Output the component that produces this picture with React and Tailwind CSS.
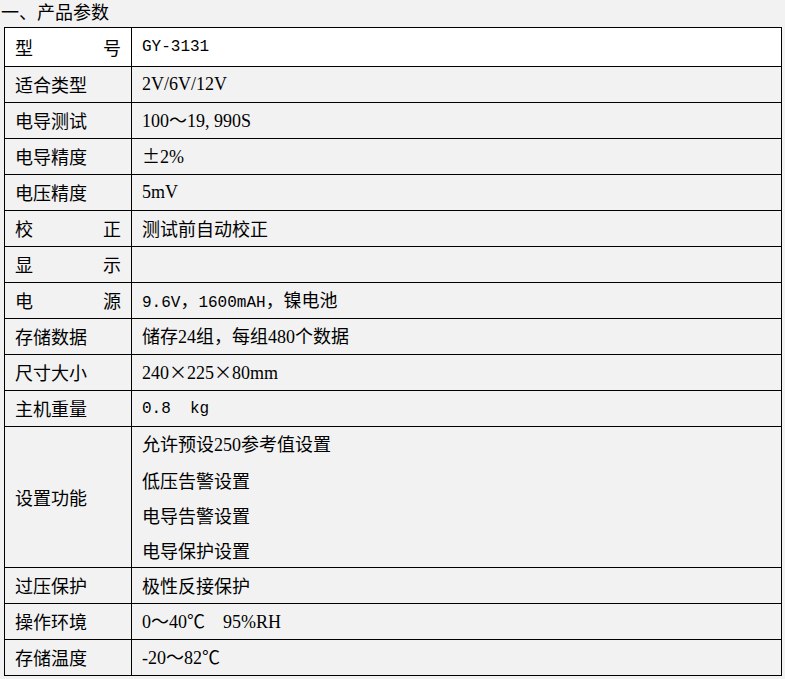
import React from "react";

function Mono({ children }) {
  return (
    <span className="whitespace-pre font-['Liberation_Mono','Noto_Sans_CJK_SC',monospace] text-[16px]">
      {children}
    </span>
  );
}

function S({ children }) {
  return <span className="whitespace-pre font-['Liberation_Serif','Noto_Sans_CJK_SC',serif]">{children}</span>;
}

function Label({ text }) {
  if (text.length === 2) {
    return (
      <div className="flex w-full justify-between">
        <span>{text[0]}</span>
        <span>{text[1]}</span>
      </div>
    );
  }
  return <span>{text}</span>;
}

function Row({ label, children, first, white, tall }) {
  return (
    <div
      className={`flex ${first ? "" : "border-t border-black"} ${white ? "bg-white" : ""} ${
        tall ? "h-[141px]" : first ? "h-[38px]" : "h-[36px]"
      }`}
    >
      <div className="box-border flex w-[127px] shrink-0 items-center border-r border-black px-[10px]">
        <Label text={label} />
      </div>
      <div className="flex flex-1 items-center px-[10px]">{children}</div>
    </div>
  );
}

export default function App() {
  return (
    <div className="min-h-[679px] w-[785px] bg-[#f2f2f2] font-['Noto_Sans_CJK_SC',sans-serif] text-[18px] text-black">
      <div className="h-[27px] pl-px leading-[22px]">一、产品参数</div>
      <div className="ml-[4px] box-border w-[778px] border border-black">
        <Row label="型号" first white>
          <Mono>GY-3131</Mono>
        </Row>
        <Row label="适合类型">
          <S>2V/6V/12V</S>
        </Row>
        <Row label="电导测试">
          <span>
            <S>100</S>～<S>19, 990S</S>
          </span>
        </Row>
        <Row label="电导精度">
          <span>
            ±<S>2%</S>
          </span>
        </Row>
        <Row label="电压精度">
          <S>5mV</S>
        </Row>
        <Row label="校正">
          <span>测试前自动校正</span>
        </Row>
        <Row label="显示"></Row>
        <Row label="电源">
          <span>
            <Mono>9.6V</Mono>，<Mono>1600mAH</Mono>，镍电池
          </span>
        </Row>
        <Row label="存储数据">
          <span>
            储存<S>24</S>组，每组<S>480</S>个数据
          </span>
        </Row>
        <Row label="尺寸大小">
          <span>
            <S>240</S>×<S>225</S>×<S>80mm</S>
          </span>
        </Row>
        <Row label="主机重量">
          <Mono>0.8  kg</Mono>
        </Row>
        <Row label="设置功能" tall>
          <div className="flex flex-col leading-[35px]">
            <span>
              允许预设<S>250</S>参考值设置
            </span>
            <span>低压告警设置</span>
            <span>电导告警设置</span>
            <span>电导保护设置</span>
          </div>
        </Row>
        <Row label="过压保护">
          <span>极性反接保护</span>
        </Row>
        <Row label="操作环境">
          <span>
            <S>0</S>～<S>40</S>℃<S>    95%RH</S>
          </span>
        </Row>
        <Row label="存储温度">
          <span>
            <S>-20</S>～<S>82</S>℃
          </span>
        </Row>
      </div>
    </div>
  );
}
